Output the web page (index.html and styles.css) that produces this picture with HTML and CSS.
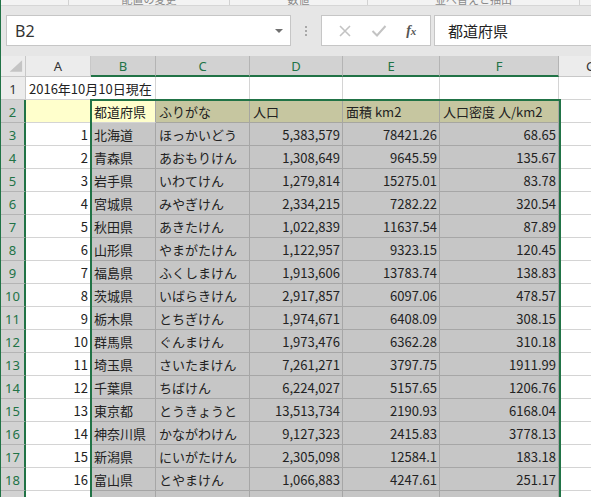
FILE: index.html
```html
<!DOCTYPE html>
<html lang="ja">
<head>
    <meta charset="UTF-8">
    <meta name="viewport" content="width=device-width, initial-scale=1.0">
    <title>都道府県</title>
    <link rel="stylesheet" href="styles.css">
</head>
<body>
    <div class="app">
        <div class="ribbon">
            <div class="group g1"></div>
            <div class="group g2"><span>配置の変更</span></div>
            <div class="group g3"><span>数値</span></div>
            <div class="group g4"><span>並べ替えと抽出</span></div>
            <div class="group g5"></div>
        </div>
        <div class="fbar">
            <div class="namebox">
                <span>B2</span>
                <i class="caret"></i>
            </div>
            <div class="grip"><i></i><i></i><i></i></div>
            <div class="fbtns">
                <svg class="ico" width="14" height="14" viewBox="0 0 14 14">
                    <path d="M2 2 L12 12 M12 2 L2 12" stroke="#c3c3c3" stroke-width="1.6" fill="none"/>
                </svg>
                <svg class="ico" width="16" height="14" viewBox="0 0 16 14">
                    <path d="M1.5 7 L6 11.5 L14.5 2" stroke="#c3c3c3" stroke-width="2" fill="none"/>
                </svg>
                <span class="fx">f<small>x</small></span>
            </div>
            <div class="finput">都道府県</div>
        </div>
        <div class="sheet" id="sheet">
            <!-- cells are generated below -->
            <div class="sel-outline"></div>
        </div>
    </div>
    <script>
        const prefs = [
            ['北海道', 'ほっかいどう', '5,383,579', '78421.26', '68.65'],
            ['青森県', 'あおもりけん', '1,308,649', '9645.59', '135.67'],
            ['岩手県', 'いわてけん', '1,279,814', '15275.01', '83.78'],
            ['宮城県', 'みやぎけん', '2,334,215', '7282.22', '320.54'],
            ['秋田県', 'あきたけん', '1,022,839', '11637.54', '87.89'],
            ['山形県', 'やまがたけん', '1,122,957', '9323.15', '120.45'],
            ['福島県', 'ふくしまけん', '1,913,606', '13783.74', '138.83'],
            ['茨城県', 'いばらきけん', '2,917,857', '6097.06', '478.57'],
            ['栃木県', 'とちぎけん', '1,974,671', '6408.09', '308.15'],
            ['群馬県', 'ぐんまけん', '1,973,476', '6362.28', '310.18'],
            ['埼玉県', 'さいたまけん', '7,261,271', '3797.75', '1911.99'],
            ['千葉県', 'ちばけん', '6,224,027', '5157.65', '1206.76'],
            ['東京都', 'とうきょうと', '13,513,734', '2190.93', '6168.04'],
            ['神奈川県', 'かながわけん', '9,127,323', '2415.83', '3778.13'],
            ['新潟県', 'にいがたけん', '2,305,098', '12584.1', '183.18'],
            ['富山県', 'とやまけん', '1,066,883', '4247.61', '251.17']
        ];

        const sheet = document.getElementById('sheet');
        let html = '';

        function cell(cls, text) {
            return `<div class="${cls}">${text || ''}</div>`;
        }

        // column headers
        html += `<div class="hd corner"><svg width="25" height="20" viewBox="0 0 25 20"><polygon points="22,4 22,16 9,16" fill="#c4c4c4"/></svg></div>`;
        ['A', 'B', 'C', 'D', 'E', 'F'].forEach((c, i) => {
            html += cell(i >= 1 ? 'hd on' : 'hd', c);
        });
        html += cell('hd last', 'G');

        // row 1
        html += cell('rh', '1');
        html += cell('c span2', '2016年10月10日現在');
        html += cell('c') + cell('c') + cell('c') + cell('c') + cell('c');

        // row 2 - table header
        html += cell('rh on', '2');
        html += cell('c hl');
        html += cell('c hl active', '都道府県');
        html += cell('c khaki', 'ふりがな');
        html += cell('c khaki', '人口');
        html += cell('c khaki', '面積 km2');
        html += cell('c khaki', '人口密度 人/km2');
        html += cell('c');

        prefs.forEach((p, i) => {
            html += cell('rh on', i + 3);
            html += cell('c num', i + 1);
            html += cell('c sel', p[0]);
            html += cell('c sel', p[1]);
            html += cell('c sel num', p[2]);
            html += cell('c sel num', p[3]);
            html += cell('c sel num', p[4]);
            html += cell('c');
        });

        // row 19, mostly cut off
        html += cell('rh on', '19');
        html += cell('c') + cell('c sel') + cell('c sel') + cell('c sel') + cell('c sel') + cell('c sel') + cell('c');

        sheet.insertAdjacentHTML('afterbegin', html);
    </script>
</body>
</html>
```

FILE: styles.css
```css
* {
    box-sizing: border-box;
    margin: 0;
    padding: 0;
}
html, body {
    width: 591px;
    height: 497px;
    overflow: hidden;
}
body {
    font-family: "Noto Sans CJK JP", "Noto Sans", sans-serif;
    color: #222;
    background-color: #e6e6e6;
}
.app {
    height: 497px;
    border-left: 1px solid #217346;
    overflow: hidden;
}

/* ribbon bottom edge */
.ribbon {
    display: flex;
    height: 6px;
    background-color: #f3f3f3;
    border-bottom: 1px solid #d6d6d6;
    overflow: hidden;
}
.group {
    display: flex;
    align-items: flex-end;
    justify-content: center;
    height: 5px;
    border-right: 1px solid #d2d2d2;
    font-size: 11px;
    line-height: 12px;
    color: #8a8a8a;
}
.group span {
    flex-shrink: 0;
    height: 12px;
}
.g1 { width: 68px; }
.g2 { width: 161px; }
.g3 { width: 138px; }
.g4 { width: 212px; }
.g5 { flex: 1; border-right: none; }

/* formula bar */
.fbar {
    display: flex;
    align-items: center;
    height: 31px;
    margin-top: 9px;
    padding-left: 5px;
}
.namebox {
    display: flex;
    align-items: center;
    justify-content: space-between;
    width: 285px;
    height: 31px;
    padding: 0 7px 0 8px;
    background-color: #fff;
    border: 1px solid #c6c6c6;
    font-family: "Noto Sans", sans-serif;
    font-size: 16px;
    color: #333;
}
.caret {
    width: 0;
    height: 0;
    border-left: 4px solid transparent;
    border-right: 4px solid transparent;
    border-top: 4px solid #707070;
}
.grip {
    display: flex;
    flex-direction: column;
    align-items: center;
    gap: 2px;
    width: 30px;
}
.grip i {
    width: 2px;
    height: 2px;
    background-color: #a8a8a8;
}
.fbtns {
    display: flex;
    align-items: center;
    justify-content: space-around;
    width: 110px;
    height: 31px;
    padding: 0 4px 0 6px;
    background-color: #fff;
    border: 1px solid #c6c6c6;
}
.fx {
    font-family: "Liberation Serif", serif;
    font-style: italic;
    font-weight: bold;
    font-size: 14px;
    color: #555;
}
.fx small {
    font-size: 11px;
}
.finput {
    flex: 1;
    height: 31px;
    margin-left: 3px;
    padding-left: 13px;
    background-color: #fff;
    border: 1px solid #c6c6c6;
    border-right: none;
    font-size: 15px;
    line-height: 29px;
    color: #222;
}

/* worksheet grid */
.sheet {
    position: relative;
    display: grid;
    grid-template-columns: 25px 65px 65px 94px 93px 97px 119px 60px;
    grid-template-rows: 21px;
    grid-auto-rows: 23px;
    width: 618px;
    margin-top: 10px;
    font-size: 13px;
}
.hd {
    display: flex;
    align-items: center;
    justify-content: center;
    background-color: #ececec;
    border-right: 1px solid #c8c8c8;
    border-bottom: 1px solid #c8c8c8;
    font-family: "Noto Sans", sans-serif;
    color: #333;
}
.hd.on {
    background-color: #d2d2d2;
    color: #217346;
    border-right-color: #b4b4b4;
    border-bottom: 2px solid #217346;
}
.hd.last {
    justify-content: flex-start;
    padding-left: 27px;
}
.corner {
    align-items: flex-start;
    justify-content: flex-start;
}
.rh {
    display: flex;
    align-items: center;
    justify-content: center;
    padding-top: 1px;
    background-color: #ececec;
    border-right: 1px solid #c8c8c8;
    border-bottom: 1px solid #c8c8c8;
    font-family: "Noto Sans", sans-serif;
    color: #333;
}
.rh.on {
    background-color: #d2d2d2;
    color: #217346;
    border-right: 2px solid #217346;
    border-bottom-color: #b4b4b4;
}
.c {
    display: flex;
    align-items: center;
    padding: 1px 3px 0 3px;
    white-space: nowrap;
    overflow: hidden;
    background-color: #fff;
    border-right: 1px solid #d4d4d4;
    border-bottom: 1px solid #d4d4d4;
}
.c.span2 {
    grid-column: span 2;
    overflow: visible;
}
.c.num {
    justify-content: flex-end;
    padding-right: 2px;
}
.c.sel {
    background-color: #c6c6c6;
    border-right-color: #a6a6a6;
    border-bottom-color: #a6a6a6;
}
.c.hl {
    background-color: #ffffcc;
}
.c.active {
    border-right-color: #a6a6a6;
}
.c.khaki {
    background-color: #c6c6a0;
    border-right-color: #a6a6a0;
    border-bottom-color: #a6a6a0;
}
.sel-outline {
    position: absolute;
    left: 89px;
    top: 43px;
    width: 471px;
    height: 480px;
    border: 2px solid #217346;
    pointer-events: none;
}
```
